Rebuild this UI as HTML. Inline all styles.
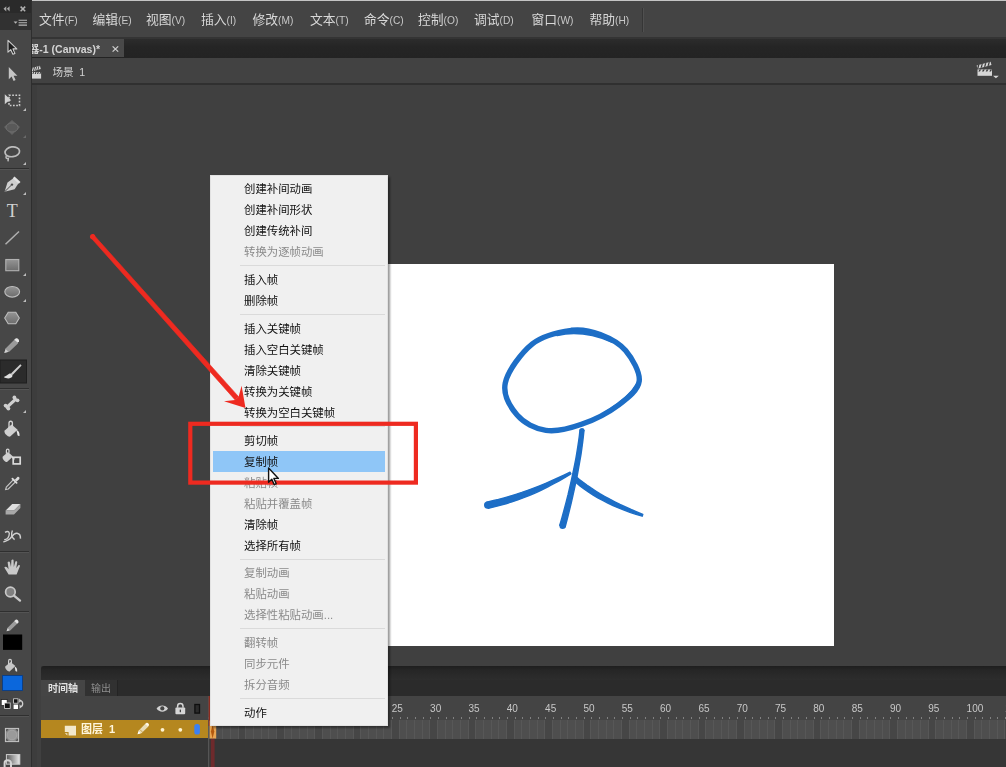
<!DOCTYPE html>
<html lang="zh-CN">
<head>
<meta charset="utf-8">
<title>Animate</title>
<style>
*{box-sizing:border-box;margin:0;padding:0}
html,body{width:1006px;height:767px;overflow:hidden;background:#404040}
body{position:relative;font-family:"Liberation Sans","Noto Sans CJK SC",sans-serif;color:#d6d6d6}
.abs{position:absolute}
#menubar,#tabbar,#scenebar,#ctx,#tl{will-change:transform}
/* top menu bar */
#menubar{left:31px;top:0;width:975px;height:39px;background:#444444;border-top:1px solid #c4c4c4;border-bottom:2px solid #343434}
#menubar span{position:absolute;top:11.4px;font-size:12.8px;line-height:16px;color:#d8d8d8;white-space:nowrap}
#menubar i{font-style:normal;font-size:10.2px;color:#c8c8c8}
#menusep{left:642px;top:8px;width:2px;height:24px;background:#363636;border-right:1px solid #505050}
/* doc tab bar */
#tabbar{left:31px;top:39px;width:975px;height:19px;background:linear-gradient(#2c2c2c,#252525 40%,#232323)}
#doctab{left:0;top:0;width:93px;height:18px;background:#494949;font-size:10.5px;font-weight:bold;color:#d4d4d4;line-height:20px;white-space:nowrap;text-indent:-2.2px}
#doctab b{position:absolute;left:80.5px;top:7px;width:7px;height:6px;text-indent:0}
/* scene bar */
#scenebar{left:31px;top:58px;width:975px;height:27px;background:#424242;border-bottom:2px solid #303030}
#scenebar .t{position:absolute;left:21.5px;top:7px;font-size:10.6px;line-height:14px;color:#d2d2d2;word-spacing:2.5px}
/* toolbar */
#toolbar{left:0;top:0;width:32px;height:767px;background:#474747;border-right:1px solid #2e2e2e}
#gutter{left:31px;top:85px;width:6px;height:682px;background:#3d3d3d}
#tbhead1{left:0;top:0;width:31px;height:13px;background:#2a2a2a}
#tbhead2{left:0;top:13px;width:31px;height:17px;background:#313131}
/* stage */
#stage{left:386px;top:264px;width:448px;height:382px;background:#fff}
/* context menu */
#ctx{left:210px;top:175px;width:178px;height:551px;background:#f0f0f0;border:1px solid #e2e2e2;box-shadow:1.5px 1.5px 2px rgba(0,0,0,.4)}
#ctx .i{position:absolute;left:2px;width:172px;height:21px;padding-left:31px;padding-top:1px;font-size:11.4px;line-height:21px;color:#111;white-space:nowrap}
#ctx .d{color:#8a8a8a}
#ctx .s{position:absolute;left:29px;width:145px;height:1px;background:#dadada}
#ctx .h{background:#8fc6f7}
/* timeline */
#tl{left:41px;top:666px;width:965px;height:101px;background:#383838}

#tl .bar1{left:0;top:0;width:965px;height:14px;background:linear-gradient(#1e1e1e,#262626 30%,#2d2d2d);border-radius:3px 0 0 0}
#tl .tabs{left:0;top:14px;width:965px;height:16px;background:#2b2b2b}
#tl .tab1{left:0;top:14px;width:44px;height:16px;background:#454545;font-size:10px;font-weight:bold;color:#e0e0e0;line-height:17px;text-align:center}
#tl .tab2{left:44px;top:14px;width:33px;height:16px;background:#313131;font-size:10px;color:#8e8e8e;line-height:17px;text-align:center;border-right:1px solid #242424}
#tl .hdr{left:0;top:30px;width:965px;height:24px;background:#444}
#tl .layer{left:0;top:54px;width:167px;height:18px;background:#b5871f}
#tl .layer .n{position:absolute;left:40px;top:2px;font-size:11px;line-height:14px;color:#fff6dc;font-weight:bold;white-space:pre}
#tl .frames{left:167px;top:54px;width:798px;height:19.5px;background:repeating-linear-gradient(90deg,#4e4e4e 0.00px,#4e4e4e 6.67px,#575757 6.67px,#575757 7.67px,#4e4e4e 7.67px,#4e4e4e 14.33px,#575757 14.33px,#575757 15.33px,#4e4e4e 15.33px,#4e4e4e 22.00px,#575757 22.00px,#575757 23.00px,#4e4e4e 23.00px,#4e4e4e 29.66px,#575757 29.66px,#575757 30.66px,#464646 30.66px,#464646 37.33px,#575757 37.33px,#575757 38.33px);border-bottom:1px solid #505050}
#tl .under{left:0;top:73px;width:965px;height:28px;background:#363636}
#tl .num{position:absolute;top:37px;font-size:10px;line-height:12px;color:#c8c8c8}
#tl .tk{left:167px;top:51px;width:798px;height:2px;background:repeating-linear-gradient(90deg,#808080 0,#808080 1px,transparent 1px,transparent 7.665px)}
</style>
</head>
<body>
<div id="menubar" class="abs">
<span style="left:8px">文件<i>(F)</i></span><span style="left:61.5px">编辑<i>(E)</i></span><span style="left:115px">视图<i>(V)</i></span><span style="left:170px">插入<i>(I)</i></span><span style="left:221.5px">修改<i>(M)</i></span><span style="left:279px">文本<i>(T)</i></span><span style="left:333px">命令<i>(C)</i></span><span style="left:387px">控制<i>(O)</i></span><span style="left:443px">调试<i>(D)</i></span><span style="left:500.5px">窗口<i>(W)</i></span><span style="left:558.5px">帮助<i>(H)</i></span>
</div>
<div id="menusep" class="abs"></div>
<div id="tabbar" class="abs"><div id="doctab" class="abs">器-1 (Canvas)*<b><svg width="7" height="6" viewBox="0 0 7 6" style="display:block"><path d="M.6,.4L6.2,5.6M6.2,.4L.6,5.6" stroke="#cfcfcf" stroke-width="1.2" fill="none"/></svg></b></div></div>
<div id="scenebar" class="abs"><span class="t">场景 1</span></div>
<!--SC--><svg class="abs" style="left:0;top:0" width="1006" height="90" viewBox="0 0 1006 90"><rect x="31.8" y="72.0" width="9.3" height="6.6" fill="#d6d6d6"/><path d="M33.1,72.0L34.1,72.0L33.4,74.1L32.4,74.1Z" fill="#3a3a3a"/><path d="M35.4,72.0L36.5,72.0L35.8,74.1L34.7,74.1Z" fill="#3a3a3a"/><path d="M37.7,72.0L38.8,72.0L38.1,74.1L37.0,74.1Z" fill="#3a3a3a"/><path d="M40.1,72.0L41.1,72.0L40.4,74.1L39.4,74.1Z" fill="#3a3a3a"/><path d="M30.9,68.2L39.9,65.8L40.8,69.0L31.8,71.4Z" fill="#d6d6d6"/><path d="M31.8,67.9L32.7,67.7L31.6,71.5L30.7,71.7Z" fill="#3a3a3a"/><path d="M34.1,67.3L35.0,67.1L33.9,70.9L33.0,71.1Z" fill="#3a3a3a"/><path d="M36.3,66.7L37.2,66.5L36.1,70.3L35.2,70.5Z" fill="#3a3a3a"/><path d="M38.6,66.1L39.5,65.9L38.4,69.7L37.5,69.9Z" fill="#3a3a3a"/><rect x="977.5" y="69.4" width="14.5" height="6.4" fill="#d6d6d6"/><path d="M979.5,69.4L981.1,69.4L980.0,71.4L978.4,71.4Z" fill="#3a3a3a"/><path d="M983.1,69.4L984.8,69.4L983.7,71.4L982.0,71.4Z" fill="#3a3a3a"/><path d="M986.7,69.4L988.4,69.4L987.3,71.4L985.7,71.4Z" fill="#3a3a3a"/><path d="M990.4,69.4L992.0,69.4L990.9,71.4L989.3,71.4Z" fill="#3a3a3a"/><path d="M976.6,65.5L990.6,61.8L991.5,65.0L977.5,68.8Z" fill="#d6d6d6"/><path d="M978.0,65.1L979.4,64.8L978.4,68.5L977.0,68.9Z" fill="#3a3a3a"/><path d="M981.5,64.2L982.9,63.8L981.9,67.6L980.5,68.0Z" fill="#3a3a3a"/><path d="M985.0,63.3L986.4,62.9L985.4,66.6L984.0,67.0Z" fill="#3a3a3a"/><path d="M988.5,62.3L989.9,62.0L988.9,65.7L987.5,66.1Z" fill="#3a3a3a"/><path d="M993,75.8H998.8L995.9,78.2Z" fill="#d6d6d6"/></svg><!--/SC-->
<div id="gutter" class="abs"></div>
<div id="toolbar" class="abs"></div>
<div id="tbhead1" class="abs"></div>
<div id="tbhead2" class="abs"></div>
<!--TB-->
<svg class="abs" style="left:0;top:0" width="31" height="767" viewBox="0 0 31 767">
<path d="M6.3,6.2L3.5,8.8L6.3,11.4ZM9.6,6.2L6.8,8.8L9.6,11.4Z" fill="#a6a6a6"/>
<path d="M20.6,6.6L25.2,11.2M25.2,6.6L20.6,11.2" stroke="#b0b0b0" stroke-width="1.5" fill="none"/>
<path d="M13.6,21.4L17.6,21.4L15.6,23.8Z" fill="#b8b8b8"/><path d="M18.6,20.3H27M18.6,22.7H27M18.6,25.1H27" stroke="#b8b8b8" stroke-width="1.1"/>
<path d="M8,40.3L8,52.2L10.8,49.7L12.9,54.3L14.9,53.4L12.9,48.9L16.8,48.9Z" fill="#1e1e1e" stroke="#cfcfcf" stroke-width="1.1" stroke-linejoin="round"/>
<path d="M8.8,67L8.8,79.2L11.6,76.6L13.6,81L15.6,80.1L13.6,75.7L17.4,75.7Z" fill="#c4c4c4"/>
<path d="M4.8,94.3L4.8,104.2L7.2,102L11.2,100.3Z" fill="#d0d0d0"/>
<rect x="9" y="95.2" width="10.5" height="10.3" fill="none" stroke="#cdcdcd" stroke-width="1.6" stroke-dasharray="1.7 1.5"/>
<path d="M26,108L26,111L23,111Z" fill="#bdbdbd"/>
<path d="M12,120L20,127L12,135L4,127Z" fill="#626262"/><ellipse cx="12" cy="127.5" rx="6" ry="4.5" fill="#595959" stroke="#6e6e6e" stroke-width="1"/>
<path d="M26,135L26,138L23,138Z" fill="#6a6a6a"/>
<ellipse cx="12.3" cy="151.8" rx="7.3" ry="4.9" fill="none" stroke="#bdbdbd" stroke-width="1.7" transform="rotate(-8 12.3 151.8)"/>
<path d="M6.5,155.5C5.5,157.5 6,159 8.3,158.4L8,161.3" fill="none" stroke="#bdbdbd" stroke-width="1.5"/>
<path d="M26,162L26,165L23,165Z" fill="#bdbdbd"/>
<path d="M0,168.5H29" stroke="#2f2f2f" stroke-width="1"/><path d="M0,169.5H29" stroke="#545454" stroke-width="1"/>
<path d="M4.6,191.8L7.5,182.5L14,177.8L19,182.5L14.6,189.3Z" fill="#cfcfcf"/><path d="M5,191.4L11.5,185" stroke="#4a4a4a" stroke-width="1"/><circle cx="12" cy="184.6" r="1.2" fill="#4a4a4a"/><path d="M14.5,176.5L20.5,182L18.8,183.8L12.8,178.2Z" fill="#e2e2e2"/>
<path d="M26,192L26,195L23,195Z" fill="#bdbdbd"/>
<text x="12.3" y="217.3" font-family="Liberation Serif,serif" font-size="18" text-anchor="middle" fill="#d2d2d2">T</text>
<path d="M5.5,244.3L19,231.5" stroke="#b0b0b0" stroke-width="1.5"/>
<defs><linearGradient id="gr" x1="0" y1="0" x2="0" y2="1"><stop offset="0" stop-color="#949494"/><stop offset="1" stop-color="#6c6c6c"/></linearGradient></defs>
<rect x="5.8" y="259.5" width="13" height="11.2" fill="url(#gr)" stroke="#b2b2b2" stroke-width="1.1"/>
<path d="M26,273L26,276L23,276Z" fill="#bdbdbd"/>
<ellipse cx="12.2" cy="291.8" rx="7.4" ry="5.3" fill="url(#gr)" stroke="#bdbdbd" stroke-width="1.1"/>
<path d="M26,299L26,302L23,302Z" fill="#bdbdbd"/>
<path d="M4.7,318L8.2,312.3L15.8,312.3L19.3,318L15.8,323.8L8.2,323.8Z" fill="url(#gr)" stroke="#bdbdbd" stroke-width="1.1"/>
<path d="M4.3,353L5.8,348.2L14.6,339.5L18.2,343.2L9.2,351.7Z" fill="#9a9a9a"/><path d="M14.2,339.8L16,338.3C17.3,337.5 19.6,339.8 19,341.2L17.7,342.8Z" fill="#e4e4e4"/><path d="M4.3,353L5.6,349L8.3,351.7Z" fill="#d0d0d0"/>
<rect x="0" y="360" width="26.5" height="23" fill="#2b2b2b" stroke="#1f1f1f" stroke-width="1"/>
<path d="M11,373.5L20.3,364.3L21.6,365.6L12.6,375Z" fill="#cfcfcf"/><path d="M3.8,377C6,376.6 7.3,374.6 9.6,373.6C11.3,373.2 12.9,374.8 12.4,376.3C11.4,378.8 6.6,379.2 3.8,377Z" fill="#dedede"/>
<path d="M0,388.5H29" stroke="#2f2f2f" stroke-width="1"/><path d="M0,389.5H29" stroke="#545454" stroke-width="1"/>
<path d="M7,407.2L15.5,399.3" stroke="#cfcfcf" stroke-width="3.2" stroke-linecap="round"/><circle cx="5.6" cy="405.6" r="1.9" fill="#cfcfcf"/><circle cx="8.4" cy="408.6" r="1.9" fill="#cfcfcf"/><circle cx="14.4" cy="397.5" r="1.9" fill="#cfcfcf"/><circle cx="17.5" cy="400.3" r="1.9" fill="#cfcfcf"/>
<path d="M26,410L26,413L23,413Z" fill="#bdbdbd"/>
<path d="M4.4,430.8L11.6,424.6L17.6,429.7L10.2,436.6C8.6,437.4 4,434 4.4,430.8Z" fill="#cfcfcf"/><path d="M9,428.5V423.2C9,420.6 12.4,420.6 12.4,423.2V426" fill="none" stroke="#d6d6d6" stroke-width="1.3"/><path d="M16.4,430C18.8,430.6 19.7,433 19.6,435.8C18.4,436.4 17.2,435.6 17.3,434Z" fill="#e6e6e6"/>
<path d="M2.6,456.8L8,452L13,456.4L7,462C5.5,462.6 2.2,459.6 2.6,456.8Z" fill="#cfcfcf"/><path d="M6.4,453.8V450.6C6.4,448.6 9,448.6 9,450.6V452.8" fill="none" stroke="#d6d6d6" stroke-width="1.2"/><path d="M12.3,457L14.3,459.4" stroke="#e0e0e0" stroke-width="1.6"/><rect x="13.2" y="457.3" width="7" height="6.6" fill="none" stroke="#dadada" stroke-width="1.7"/>
<path d="M5.6,489.6L6.3,487L13.5,479.6L15.6,481.7L8.3,489Z" fill="none" stroke="#c6c6c6" stroke-width="1.1"/><path d="M12.4,478.6L16.6,482.8" stroke="#dcdcdc" stroke-width="1.8" stroke-linecap="round"/><path d="M14.8,479.8L17.2,477.2C18.4,476 20.3,477.8 19.2,479.2L16.6,481.6Z" fill="#dcdcdc"/>
<path d="M5.6,510.6L12.2,504L20.4,504L14,510.6Z" fill="#e0e0e0"/><path d="M5.6,510.6H14V514.6H5.6ZM14,510.6L20.4,504V508L14,514.6Z" fill="#a8a8a8"/>
<path d="M3.4,542C6,541 8.4,540.6 10.2,538.6C12.4,536 13.6,532.8 17,533.2C19.8,533.6 20.6,536.2 20.4,538.6" fill="none" stroke="#cfcfcf" stroke-width="1.5"/><path d="M5,532.4C8.6,530.2 10,532.6 9,535.6C8.2,538.2 6.2,539.6 4.2,539.6M12.4,530.6C11,534 11.6,537.6 14.6,539.6" fill="none" stroke="#cfcfcf" stroke-width="1.4"/>
<path d="M0,551.5H29" stroke="#2f2f2f" stroke-width="1"/><path d="M0,552.5H29" stroke="#545454" stroke-width="1"/>
<path d="M8.6,574.6L4.3,567.4C5.2,566.2 6.4,566.6 7.2,567.6L8.6,569.2L7.6,562.2C8.6,561 9.8,561.4 10,562.4L11,567L11.4,560.2C12.4,559.2 13.6,559.6 13.6,560.6L13.8,567L15.4,561.6C16.4,561 17.4,561.4 17.2,562.6L16.2,568.2L18.6,565C19.6,564.6 20.4,565.4 19.8,566.6L16.6,574.6Z" fill="#c9c9c9"/>
<circle cx="10.4" cy="592" r="4.8" fill="#808080" stroke="#c8c8c8" stroke-width="1.7"/><path d="M14,595.6L20,600.6" stroke="#c8c8c8" stroke-width="2.4" stroke-linecap="round"/>
<path d="M0,611.5H29" stroke="#2f2f2f" stroke-width="1"/><path d="M0,612.5H29" stroke="#545454" stroke-width="1"/>
<path d="M6.6,631.2L7.6,627.8L14.6,620.8L17.4,623.6L10.2,630.4Z" fill="#9c9c9c"/><path d="M14.3,621L15.7,619.7C16.9,618.9 19.2,621.1 18.4,622.4L17.2,623.8Z" fill="#e6e6e6"/><path d="M6.6,631.2L7.6,628.2L9.6,630.2Z" fill="#d8d8d8"/>
<rect x="3" y="634.5" width="19.2" height="15.4" fill="#000"/>
<path d="M5.2,666.6L10.6,662L15.4,666L9.6,671.4C8.2,672 4.8,669.2 5.2,666.6Z" fill="#c6c6c6"/><path d="M8.6,664.6V661C8.6,658.8 11.4,658.8 11.4,661V663" fill="none" stroke="#cfcfcf" stroke-width="1.2"/><path d="M14.6,666.4C16.6,667 17.4,669 17.2,671.4C16.2,671.8 15.2,671.2 15.3,670Z" fill="#e2e2e2"/>
<rect x="2.5" y="675.5" width="20" height="15" fill="#0b67dc" stroke="#0c3f86" stroke-width="1"/>
<rect x="1.2" y="699.6" width="6" height="6" fill="#fff" stroke="#222" stroke-width=".8"/><rect x="4.6" y="703" width="5.6" height="5.6" fill="#111" stroke="#ddd" stroke-width=".8"/>
<rect x="13.6" y="698.8" width="4.4" height="4.4" fill="#111" stroke="#ddd" stroke-width=".8"/><rect x="13.6" y="704.6" width="4.4" height="4.4" fill="#fff"/><path d="M20,700.6C23.4,700.6 23.6,706.4 20.4,706.8" fill="none" stroke="#d0d0d0" stroke-width="1.3"/><path d="M19.2,698.6V702.8L21.4,700.6ZM19.6,708.8V704.6L21.8,706.8Z" fill="#d0d0d0"/>
<path d="M0,715.5H29" stroke="#2f2f2f" stroke-width="1"/><path d="M0,716.5H29" stroke="#545454" stroke-width="1"/>
<rect x="5.4" y="728.4" width="13.2" height="13.2" fill="#8e8e8e" stroke="#c6c6c6" stroke-width="1"/><path d="M6.2,729.2h2v1h-1v1h-1ZM17.8,729.2h-2v1h1v1h1ZM6.2,740.8h2v-1h-1v-1h-1ZM17.8,740.8h-2v-1h1v-1h1Z" fill="#4a4a4a"/><circle cx="12" cy="735" r="4.8" fill="#9a9a9a" stroke="#a8a8a8" stroke-width=".8"/>
<defs><linearGradient id="gs" x1="0" y1="0" x2="1" y2="0"><stop offset="0" stop-color="#555"/><stop offset="1" stop-color="#e8e8e8"/></linearGradient></defs><rect x="6.4" y="754.6" width="13.4" height="9.6" fill="url(#gs)" stroke="#d0d0d0" stroke-width="1"/><path d="M4.6,767V763C4.6,759.4 11,759.4 11,763V767" fill="none" stroke="#d4d4d4" stroke-width="2"/>
</svg>
<!--/TB-->
<div id="stage" class="abs"></div>
<!--FIG-->
<svg class="abs" style="left:0;top:0" width="1006" height="767" viewBox="0 0 1006 767">
<path d="M571.4,330.3C560.1,331.9 543.4,335.1 532.4,343.8C521.4,352.6 507.9,370.9 505.3,382.8C502.8,394.7 510.3,407.1 517.1,415.0C523.9,422.9 535.2,428.8 545.9,430.3C556.6,431.9 569.4,428.6 581.5,424.3C593.6,420.1 609.2,412.0 618.8,404.8C628.4,397.6 638.1,390.1 639.2,381.1C640.3,372.1 632.1,358.4 625.6,350.6C619.1,342.8 609.2,337.9 600.2,334.5C591.2,331.1 582.7,328.8 571.4,330.3Z" fill="none" stroke="#1d6ec6" stroke-width="5.4" stroke-linejoin="round"/>
<path d="M557,334.4C572,331 590,331.6 612,341" fill="none" stroke="#1d6ec6" stroke-width="3.6" stroke-linecap="round"/><path d="M637.6,384C632,394 622,403 606,412.6" fill="none" stroke="#1d6ec6" stroke-width="3.4" stroke-linecap="round"/>
<path d="M580.0,429.8L579.4,435.5L578.6,441.3L577.7,447.4L576.7,453.6L575.6,460.0L574.3,466.5L572.9,473.2L571.4,480.1L569.8,487.2L568.1,494.5L566.2,501.9L564.2,509.5L562.1,517.3L559.8,525.3L565.2,526.7L567.3,518.7L569.3,510.8L571.2,503.1L572.9,495.6L574.5,488.3L576.1,481.1L577.5,474.2L578.7,467.4L579.9,460.7L581.0,454.3L581.9,448.0L582.7,441.9L583.4,435.9L584.0,430.2Z" fill="#1d6ec6" stroke="#1d6ec6" stroke-width="1.4" stroke-linejoin="round"/>
<path d="M570.1,472.2L563.9,475.2L557.8,478.0L551.7,480.7L545.7,483.3L539.6,485.8L533.7,488.1L527.7,490.3L521.8,492.4L515.9,494.3L510.1,496.1L504.2,497.8L498.4,499.4L492.6,500.8L486.8,502.2L488.2,508.2L494.1,506.9L500.0,505.4L505.9,503.8L511.9,501.9L517.8,499.9L523.7,497.7L529.7,495.3L535.6,492.8L541.5,490.0L547.4,487.1L553.3,484.0L559.2,480.8L565.1,477.4L570.9,473.8Z" fill="#1d6ec6" stroke="#1d6ec6" stroke-width="1.4" stroke-linejoin="round"/>
<path d="M572.9,479.8L576.5,483.0L580.3,486.2L584.4,489.2L588.7,492.2L593.2,495.1L597.8,497.9L602.7,500.5L607.8,503.1L613.0,505.5L618.5,507.9L624.1,510.1L629.9,512.3L636.0,514.3L642.2,516.2L642.8,514.4L636.8,511.9L631.1,509.5L625.5,506.9L620.0,504.4L614.8,501.8L609.8,499.2L604.9,496.5L600.2,493.8L595.7,491.0L591.4,488.2L587.2,485.3L583.2,482.4L579.4,479.5L575.7,476.4Z" fill="#1d6ec6" stroke="#1d6ec6" stroke-width="1.4" stroke-linejoin="round"/>
<circle cx="487.6" cy="505.1" r="3.6" fill="#1d6ec6"/><circle cx="562.6" cy="525.8" r="3.2" fill="#1d6ec6"/><circle cx="582" cy="430.4" r="2.4" fill="#1d6ec6"/>
</svg>
<!--/FIG-->
<div id="tl" class="abs">
<div class="abs bar1"></div><div class="abs tabs"></div>
<div class="abs tab1">时间轴</div><div class="abs tab2">输出</div>
<div class="abs hdr"></div>
<div class="abs frames"></div>
<div class="abs under"></div>
<div class="abs layer"><span class="n">图层  1</span></div>
<div class="abs tk"></div>
<!--TLS--><svg class="abs" style="left:0;top:0" width="260" height="101" viewBox="41 666 260 101">
<path d="M156.6,708.6C159,704.4 165.6,704.4 168,708.6C165.6,712.8 159,712.8 156.6,708.6Z" fill="#d2d2d2"/><circle cx="162.3" cy="708.4" r="2.1" fill="#444"/>
<rect x="175.4" y="707.6" width="9.8" height="6.6" rx="1" fill="#d6d6d6"/><path d="M177.6,707.8V706.2C177.6,702.6 183,702.6 183,706.2V707.8" fill="none" stroke="#d6d6d6" stroke-width="1.5"/><rect x="179.7" y="709.6" width="1.3" height="2.6" fill="#444"/>
<rect x="194.9" y="704.5" width="4.6" height="8.6" fill="#2b2b2b" stroke="#0e0e0e" stroke-width="1.3"/>
<path d="M64.8,725.8H76V735.4H68.6V732H64.8Z" fill="#f2e8cc"/><path d="M64.8,733.2H67.4V735.4Z" fill="#f2e8cc"/>
<path d="M137.6,734.2L138.7,730.4L145.6,723.6L148.4,726.4L141.4,733.2Z" fill="#e9dcb6"/><path d="M145.2,723.9L146.4,722.9C147.6,722.2 149.6,724.2 148.9,725.4L148,726.5Z" fill="#fff8e6"/><path d="M137.6,734.2L138.5,731.2L140.6,733.3Z" fill="#fff"/><path d="M140,729.6L142.4,732" stroke="#b5871f" stroke-width=".7"/>
<circle cx="162.5" cy="729.8" r="1.9" fill="#fff3d0"/><circle cx="180.3" cy="729.8" r="1.9" fill="#fff3d0"/>
<rect x="194.3" y="724" width="5.6" height="10.6" rx="2.6" fill="#3b80f2"/>
<rect x="208.2" y="696" width="1" height="71" fill="#5e5e5e"/>
<rect x="208.6" y="696" width="2.6" height="30" fill="#8a2a1e"/>
<rect x="210.8" y="738.5" width="3.8" height="29" fill="#6e2a2c"/>
<rect x="209.6" y="720.5" width="6.6" height="18" fill="#e9a552"/><path d="M212.6,725L214.3,731.5L212.6,738.5L210.9,731.5Z" fill="#b4590e"/>
</svg><!--/TLS-->
<span class="num" style="left:350.8px">25</span><span class="num" style="left:389.1px">30</span><span class="num" style="left:427.4px">35</span><span class="num" style="left:465.7px">40</span><span class="num" style="left:504.1px">45</span><span class="num" style="left:542.4px">50</span><span class="num" style="left:580.7px">55</span><span class="num" style="left:619.0px">60</span><span class="num" style="left:657.4px">65</span><span class="num" style="left:695.7px">70</span><span class="num" style="left:734.0px">75</span><span class="num" style="left:772.3px">80</span><span class="num" style="left:810.7px">85</span><span class="num" style="left:849.0px">90</span><span class="num" style="left:887.3px">95</span><span class="num" style="left:925.6px">100</span><span class="num" style="left:964.0px">105</span>
</div>
<div id="ctx" class="abs">
<div class="i" style="top:2.00px">创建补间动画</div>
<div class="i" style="top:23.00px">创建补间形状</div>
<div class="i" style="top:44.00px">创建传统补间</div>
<div class="i d" style="top:65.00px">转换为逐帧动画</div>
<div class="s" style="top:89.00px"></div>
<div class="i" style="top:92.85px">插入帧</div>
<div class="i" style="top:113.85px">删除帧</div>
<div class="s" style="top:137.85px"></div>
<div class="i" style="top:141.70px">插入关键帧</div>
<div class="i" style="top:162.70px">插入空白关键帧</div>
<div class="i" style="top:183.70px">清除关键帧</div>
<div class="i" style="top:204.70px">转换为关键帧</div>
<div class="i" style="top:225.70px">转换为空白关键帧</div>
<div class="s" style="top:249.70px"></div>
<div class="i" style="top:253.55px">剪切帧</div>
<div class="i h" style="top:274.55px">复制帧</div>
<div class="i d" style="top:295.55px">粘贴帧</div>
<div class="i d" style="top:316.55px">粘贴并覆盖帧</div>
<div class="i" style="top:337.55px">清除帧</div>
<div class="i" style="top:358.55px">选择所有帧</div>
<div class="s" style="top:382.55px"></div>
<div class="i d" style="top:386.40px">复制动画</div>
<div class="i d" style="top:407.40px">粘贴动画</div>
<div class="i d" style="top:428.40px">选择性粘贴动画...</div>
<div class="s" style="top:452.40px"></div>
<div class="i d" style="top:456.25px">翻转帧</div>
<div class="i d" style="top:477.25px">同步元件</div>
<div class="i d" style="top:498.25px">拆分音频</div>
<div class="s" style="top:522.25px"></div>
<div class="i" style="top:526.10px">动作</div>
</div>
<!--OVER-->
<svg class="abs" style="left:0;top:0" width="1006" height="767" viewBox="0 0 1006 767">
<path d="M90.2,236.9L235.1,399.9L238.6,396.7L93.2,234.3Z" fill="#ee2a20" stroke="#ee2a20" stroke-width="0.6" stroke-linejoin="round"/>
<circle cx="92.7" cy="236.7" r="2.6" fill="#ee2a20"/>
<path d="M245.5,408.0L224.0,401.2L235.1,399.9L238.6,396.7L241.6,385.8Z" fill="#ee2a20"/>
<rect x="190.3" y="423.8" width="225.6" height="58.8" fill="none" stroke="#ee2a20" stroke-width="4.2"/>
<path transform="translate(268.6,468)" d="M0,0 L0,14.2 L3.2,11.3 L5.6,16.6 L7.6,15.7 L5.3,10.4 L9.8,10.4 Z" fill="#fff" stroke="#111" stroke-width="1.4" stroke-linejoin="round"/>
</svg>
<!--/OVER-->
</body>
</html>
